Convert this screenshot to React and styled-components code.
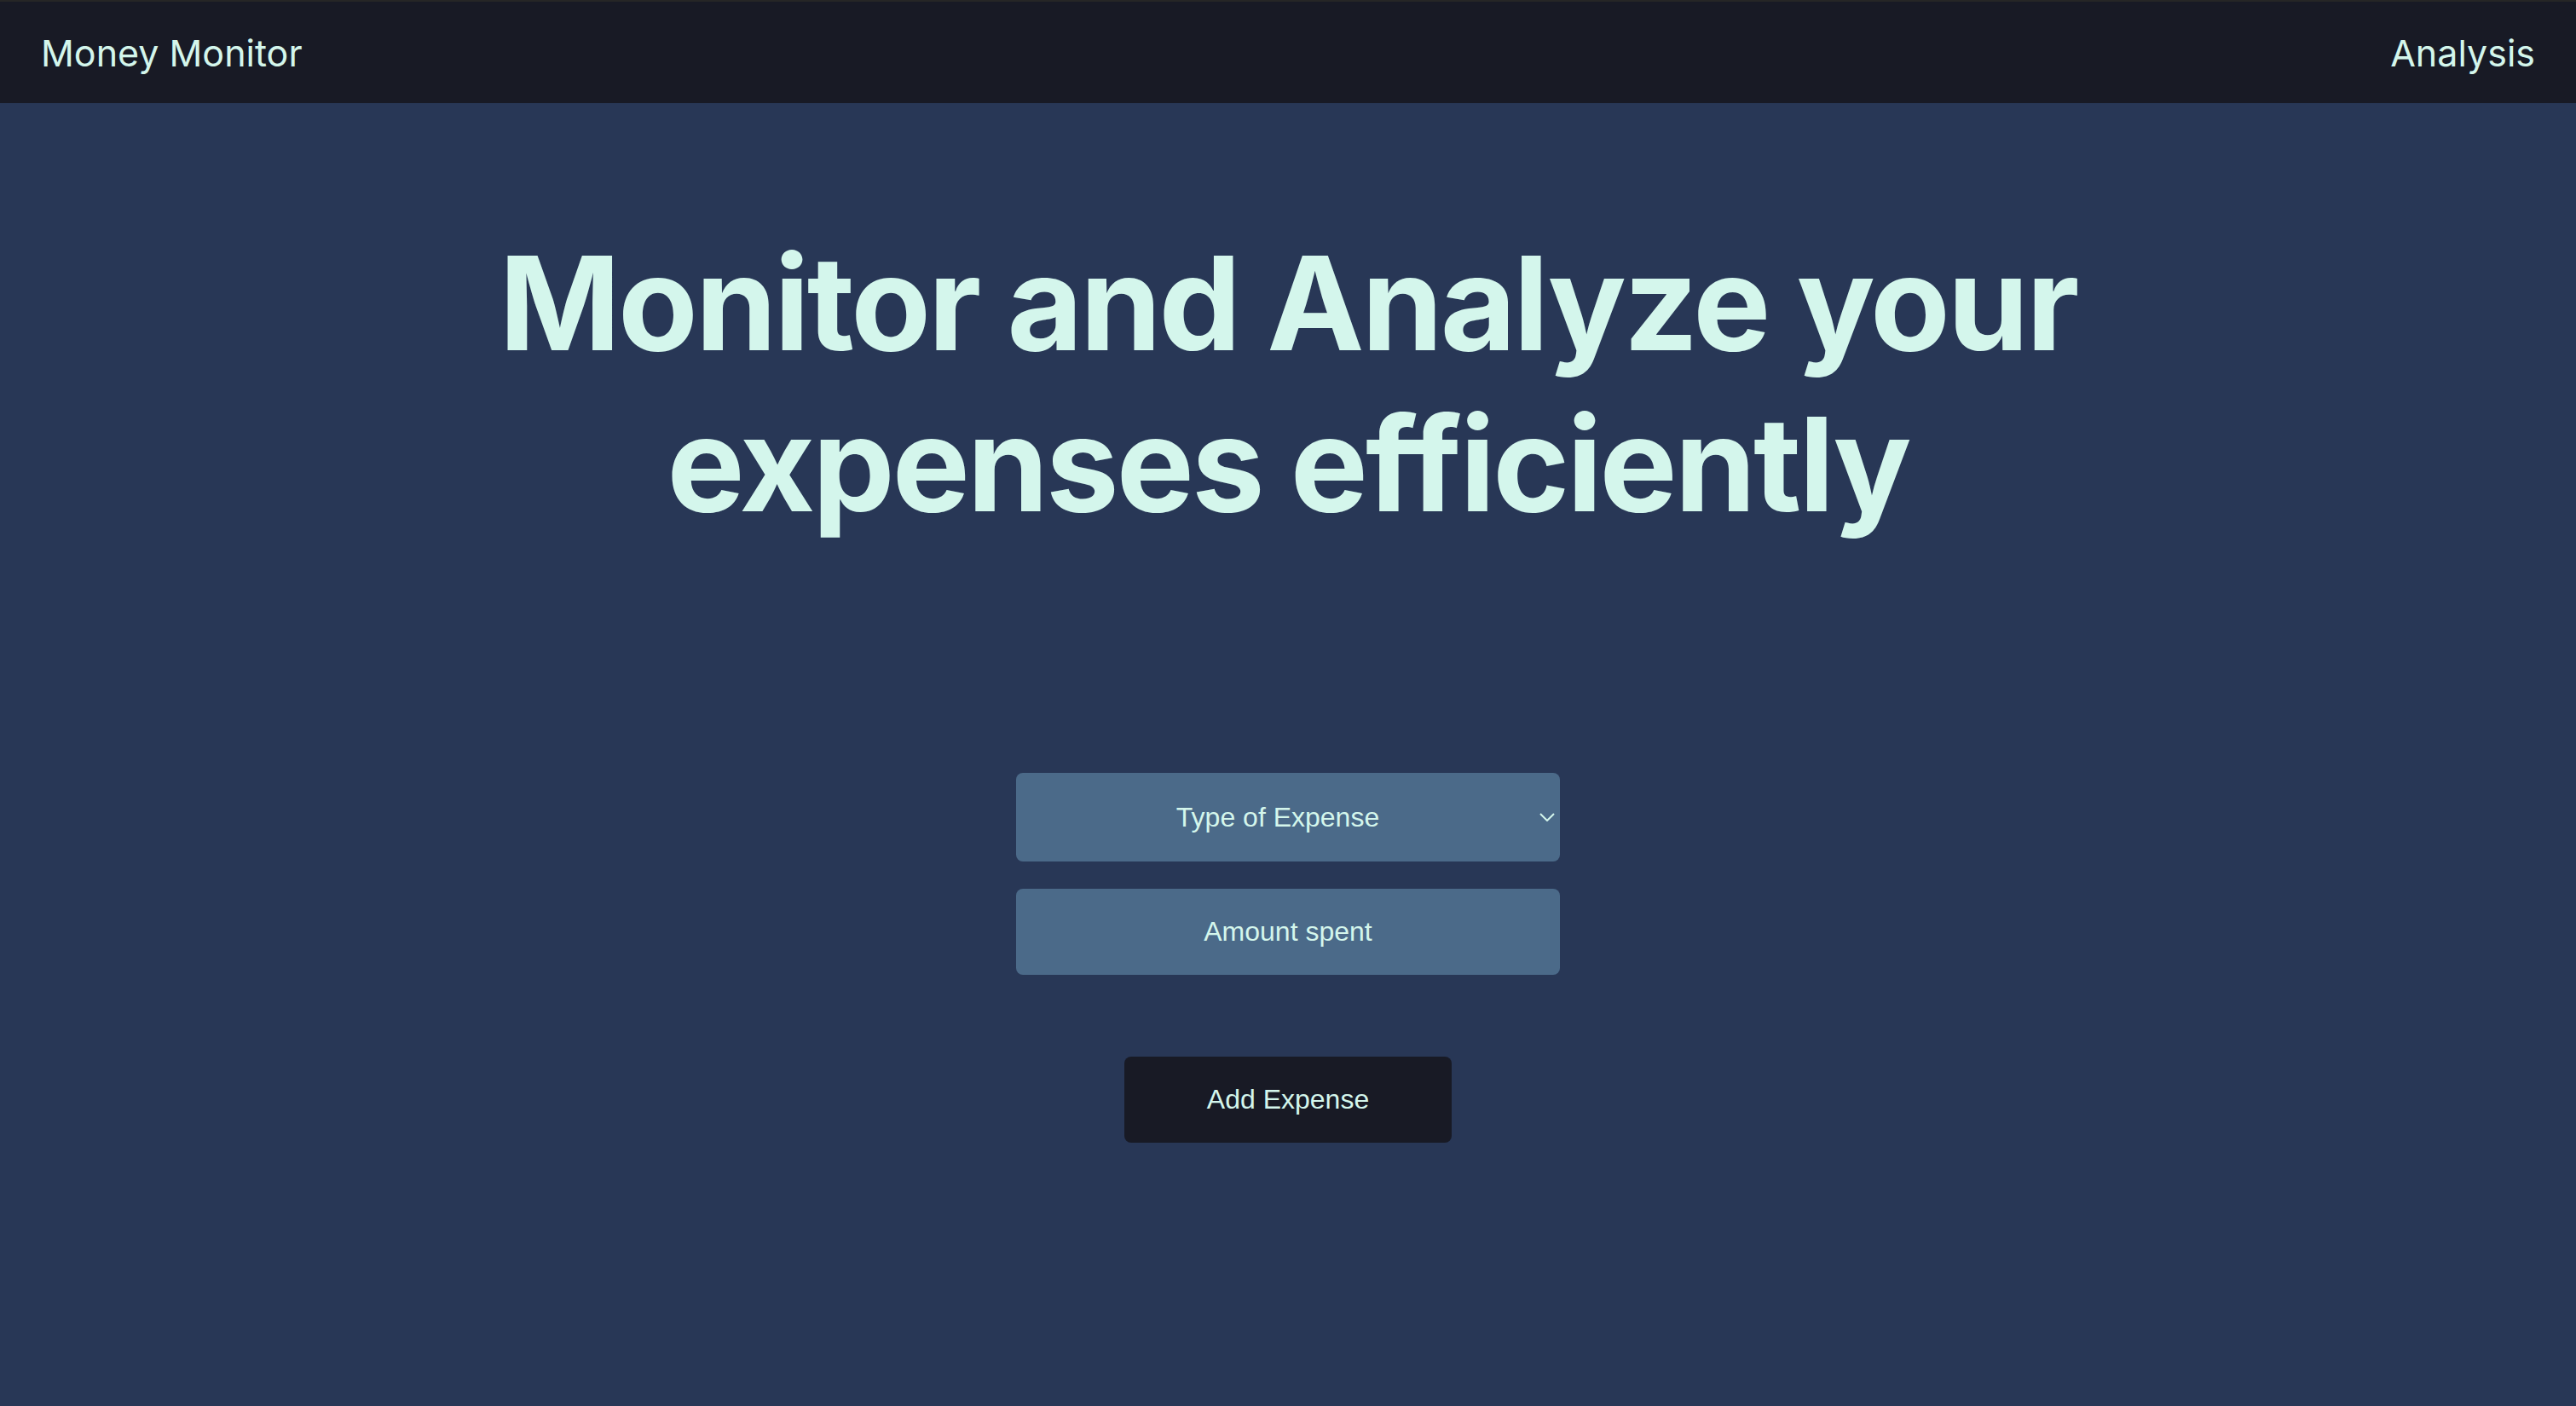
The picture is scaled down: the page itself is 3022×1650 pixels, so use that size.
import React from "react";
import styled, { createGlobalStyle } from "styled-components";

const Global = createGlobalStyle`
  html, body { margin: 0; padding: 0; background: #283756; }
  body { font-family: Inter, "Noto Sans", sans-serif; }
  #root { min-height: 100vh; display: flex; flex-direction: column; }
`;

const Page = styled.div`
  min-height: 100vh;
  display: flex;
  flex-direction: column;
  background: #283756;
  color: #d4f6ec;
`;

const NavBar = styled.nav`
  height: 121px;
  box-sizing: border-box;
  border-top: 2px solid #262626;
  background: #181a25;
  display: flex;
  align-items: center;
  justify-content: space-between;
  padding: 0 48px;
`;

const NavLink = styled.a`
  font-family: Inter, sans-serif;
  font-size: 43px;
  font-weight: 400;
  color: #d4f6ec;
  text-decoration: none;
  cursor: pointer;
`;

const Main = styled.main`
  flex: 1;
  display: flex;
  flex-direction: column;
  align-items: center;
  padding-top: 140px;
`;

const Heading = styled.h1`
  margin: 0;
  font-family: Inter, sans-serif;
  font-weight: 700;
  font-size: 153px;
  line-height: 189px;
  letter-spacing: -3px;
  text-align: center;
  color: #d4f6ec;
  max-width: 2000px;
`;

const Form = styled.form`
  margin-top: 268px;
  display: flex;
  flex-direction: column;
  align-items: center;
`;

const SelectWrap = styled.div`
  position: relative;
  width: 638px;
`;

const Select = styled.select`
  appearance: none;
  width: 100%;
  height: 104px;
  border: none;
  border-radius: 8px;
  background: #4b6a89;
  color: #d4f6ec;
  font-family: "Liberation Sans", Arial, sans-serif;
  font-size: 32px;
  text-align: center;
  text-align-last: center;
  padding: 0 24px 0 0;
  outline: none;
`;

const Chevron = styled.svg`
  position: absolute;
  right: 6px;
  top: 50%;
  transform: translateY(-50%);
  pointer-events: none;
`;

const Input = styled.input`
  margin-top: 32px;
  width: 638px;
  height: 101px;
  box-sizing: border-box;
  border: none;
  border-radius: 8px;
  background: #4b6a89;
  color: #d4f6ec;
  font-family: "Liberation Sans", Arial, sans-serif;
  font-size: 32px;
  text-align: center;
  outline: none;
  &::placeholder { color: #d4f6ec; opacity: 1; }
`;

const Button = styled.button`
  margin-top: 96px;
  width: 384px;
  height: 101px;
  border: none;
  border-radius: 8px;
  background: #181a25;
  color: #d4f6ec;
  font-family: "Liberation Sans", Arial, sans-serif;
  font-size: 32px;
  cursor: pointer;
`;

export default function App() {
  return (
    <Page>
      <Global />
      <NavBar>
        <NavLink>Money Monitor</NavLink>
        <NavLink>Analysis</NavLink>
      </NavBar>
      <Main>
        <Heading>
          Monitor and Analyze your
          <br />
          expenses efficiently
        </Heading>
        <Form onSubmit={(e) => e.preventDefault()}>
          <SelectWrap>
            <Select defaultValue="">
              <option value="" disabled>Type of Expense</option>
              <option>Food</option>
              <option>Travel</option>
              <option>Bills</option>
            </Select>
            <Chevron width="18" height="10" viewBox="0 0 18 10" fill="none">
              <path d="M1 1 L9 9 L17 1" stroke="#d4f6ec" strokeWidth="2" />
            </Chevron>
          </SelectWrap>
          <Input placeholder="Amount spent" />
          <Button type="submit">Add Expense</Button>
        </Form>
      </Main>
    </Page>
  );
}
